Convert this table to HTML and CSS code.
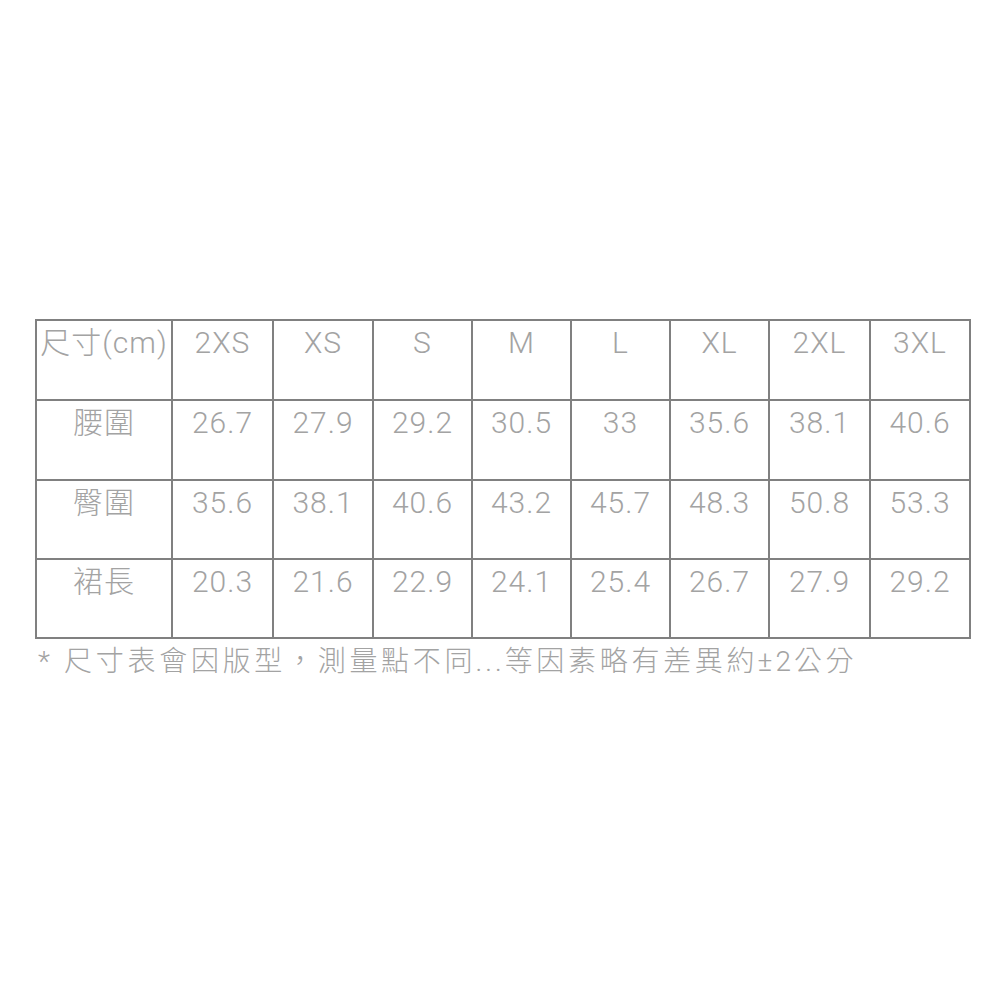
FILE: index.html
```html
<!DOCTYPE html>
<html lang="zh-Hant">
<head>
<meta charset="utf-8">
<title>尺寸表</title>
<link rel="stylesheet" href="styles.css">
</head>
<body>
<div class="page">
  <div class="size-table">
    <div class="cell">尺寸(cm)</div>
    <div class="cell">2XS</div>
    <div class="cell">XS</div>
    <div class="cell">S</div>
    <div class="cell">M</div>
    <div class="cell">L</div>
    <div class="cell">XL</div>
    <div class="cell">2XL</div>
    <div class="cell">3XL</div>

    <div class="cell">腰圍</div>
    <div class="cell">26.7</div>
    <div class="cell">27.9</div>
    <div class="cell">29.2</div>
    <div class="cell">30.5</div>
    <div class="cell">33</div>
    <div class="cell">35.6</div>
    <div class="cell">38.1</div>
    <div class="cell">40.6</div>

    <div class="cell">臀圍</div>
    <div class="cell">35.6</div>
    <div class="cell">38.1</div>
    <div class="cell">40.6</div>
    <div class="cell">43.2</div>
    <div class="cell">45.7</div>
    <div class="cell">48.3</div>
    <div class="cell">50.8</div>
    <div class="cell">53.3</div>

    <div class="cell">裙長</div>
    <div class="cell">20.3</div>
    <div class="cell">21.6</div>
    <div class="cell">22.9</div>
    <div class="cell">24.1</div>
    <div class="cell">25.4</div>
    <div class="cell">26.7</div>
    <div class="cell">27.9</div>
    <div class="cell">29.2</div>
  </div>
  <p class="note">* 尺寸表會因版型，測量點不<span class="tight">同...</span>等因素略有差異<span class="tight">約±2</span>公分</p>
</div>
</body>
</html>
```

FILE: styles.css
```css
html, body {
  margin: 0;
  padding: 0;
  background: #ffffff;
}

.page {
  padding: 319px 0 0 35px;
  font-family: Roboto, "Noto Sans CJK TC", sans-serif;
  font-weight: 300;
  color: #a3a3a3;
}

.size-table {
  display: grid;
  grid-template-columns: 134px 99px 98px 97px 97px 97px 97px 99px 98px;
  grid-template-rows: 78px 78px 77px 77px;
  gap: 2px;
  padding: 2px;
  background: #808080;
  width: max-content;
}

.cell {
  background: #ffffff;
  text-align: center;
  font-size: 30px;
  line-height: 34px;
  padding-top: 5px;
  letter-spacing: 1px;
  white-space: nowrap;
}

.note {
  margin: 6px 0 0 3px;
  font-size: 28px;
  line-height: 34px;
  letter-spacing: 3.7px;
}

.tight {
  letter-spacing: 3px;
}
```
